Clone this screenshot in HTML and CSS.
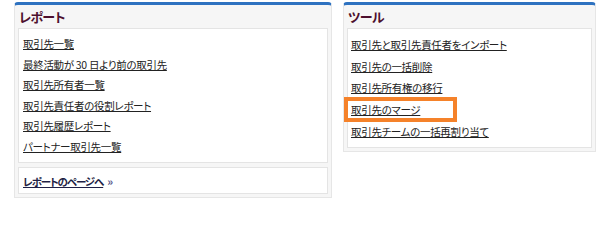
FILE: index.html
```html
<!DOCTYPE html>
<html lang="ja">
<head>
<meta charset="utf-8">
<link rel="stylesheet" href="styles.css">
</head>
<body>
<div class="page">
  <section class="panel panel-left">
    <h3 class="panel-title">レポート</h3>
    <div class="box list left-list">
      <a class="item" href="#">取引先一覧</a>
      <a class="item" href="#">最終活動が 30 日より前の取引先</a>
      <a class="item" href="#">取引先所有者一覧</a>
      <a class="item" href="#">取引先責任者の役割レポート</a>
      <a class="item" href="#">取引先履歴レポート</a>
      <a class="item" href="#">パートナー取引先一覧</a>
    </div>
    <div class="box footer">
      <a class="more" href="#">レポートのページへ</a><span class="raquo">»</span>
    </div>
  </section>
  <section class="panel panel-right">
    <h3 class="panel-title">ツール</h3>
    <div class="box list right-list">
      <a class="item" href="#">取引先と取引先責任者をインポート</a>
      <a class="item" href="#">取引先の一括削除</a>
      <a class="item" href="#">取引先所有権の移行</a>
      <div class="item-wrap"><a class="item" href="#">取引先のマージ</a><span class="highlight"></span></div>
      <a class="item" href="#">取引先チームの一括再割り当て</a>
    </div>
  </section>
</div>
</body>
</html>
```
FILE: styles.css
```css
html, body {
  margin: 0;
  padding: 0;
  background: #ffffff;
}
body {
  font-family: "Noto Sans CJK JP", "Noto Sans", sans-serif;
  font-feature-settings: "palt";
  font-size: 10.5px;
  color: #222222;
}
.page {
  display: flex;
  align-items: flex-start;
  gap: 11px;
  padding: 2px 0 0 14px;
}
.panel {
  box-sizing: border-box;
  background: #f6f6f6;
  border: 1px solid #e6e6e6;
  border-top: 3px solid #2e72c0;
  border-radius: 4px 4px 0 0;
  padding: 0 3px 3px 3px;
}
.panel-left {
  width: 318px;
}
.panel-right {
  width: 253px;
}
.panel-title {
  margin: 0;
  height: 23px;
  line-height: 23px;
  padding-left: 1px;
  font-size: 13px;
  font-weight: bold;
  color: #4d0f2e;
  letter-spacing: -0.6px;
}
.box {
  background: #ffffff;
  border: 1px solid #e4e4e4;
}
.list {
  padding: 5px 4px 5px 4px;
}
.left-list .item {
  height: 20.5px;
  line-height: 20.5px;
}
.right-list {
  padding: 5px 3px 4.5px 3px;
}
.right-list .item {
  height: 21.7px;
  line-height: 21.7px;
}
.item {
  display: block;
  width: max-content;
  color: #222222;
  text-decoration: underline;
  text-underline-offset: 1px;
  letter-spacing: -0.3px;
}
.item-wrap {
  position: relative;
}
.highlight {
  position: absolute;
  left: -7px;
  top: -2px;
  width: 113px;
  height: 25px;
  box-sizing: border-box;
  border: 4px solid #f5822a;
}
.footer {
  margin-top: 4px;
  height: 24px;
  display: flex;
  align-items: center;
  padding-left: 4px;
  padding-top: 1px;
  box-sizing: content-box;
}
.more {
  font-weight: bold;
  color: #1f1f45;
  text-decoration: underline;
  text-underline-offset: 1px;
  letter-spacing: -1.1px;
}
.raquo {
  margin-left: 4px;
  color: #55558a;
  font-weight: bold;
  font-size: 11px;
}
```
